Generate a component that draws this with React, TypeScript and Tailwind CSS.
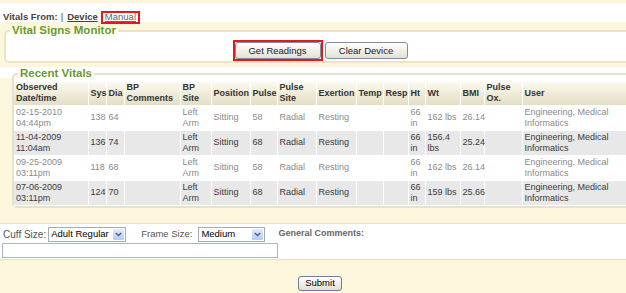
const cols = [
  'w-[74px]', 'w-[18px]', 'w-[18px]', 'w-[56px]', 'w-[31px]', 'w-[39px]', 'w-[27px]', 'w-[39px]',
  'w-[40px]', 'w-[27px]', 'w-[25px]', 'w-[17px]', 'w-[35px]', 'w-[24px]', 'w-[38px]', 'w-[110px]',
];

const headers = [
  'Observed Date/time', 'Sys', 'Dia', 'BP Comments', 'BP Site', 'Position', 'Pulse', 'Pulse Site',
  'Exertion', 'Temp', 'Resp', 'Ht', 'Wt', 'BMI', 'Pulse Ox.', 'User',
];

interface Vital {
  date: string;
  time: string;
  sys: string;
  dia: string;
  pulse: string;
  wt: string;
  bmi: string;
}

const vitals: Vital[] = [
  { date: '02-15-2010', time: '04:44pm', sys: '138', dia: '64', pulse: '58', wt: '162 lbs', bmi: '26.14' },
  { date: '11-04-2009', time: '11:04am', sys: '136', dia: '74', pulse: '68', wt: '156.4 lbs', bmi: '25.24' },
  { date: '09-25-2009', time: '03:11pm', sys: '118', dia: '68', pulse: '58', wt: '162 lbs', bmi: '26.14' },
  { date: '07-06-2009', time: '03:11pm', sys: '124', dia: '70', pulse: '68', wt: '159 lbs', bmi: '25.66' },
];

const Chevron = () => (
  <svg width="7" height="5" viewBox="0 0 7 5">
    <path d="M0.8 1 L3.5 3.6 L6.2 1" stroke="#4a5f8c" strokeWidth="1.4" fill="none" />
  </svg>
);

const FakeSelect = ({ value, width }: { value: string; width: string }) => (
  <div className={`${width} h-[15px] flex items-center border border-[#a5acb2] bg-white`}>
    <span className="pl-[2px] text-black leading-none whitespace-nowrap">{value}</span>
    <span className="ml-auto mr-[1px] w-[11px] h-[11px] flex items-center justify-center rounded-[1px] bg-linear-to-b from-[#e2eafd] to-[#b7c9f4]">
      <Chevron />
    </span>
  </div>
);

const Button = ({ label, width }: { label: string; width: string }) => (
  <button
    className={`${width} h-[17px] flex items-center justify-center border border-[#7d8ea2] rounded-[3px] bg-linear-to-b from-white to-[#e4e1d5] text-[#222] leading-none`}
  >
    {label}
  </button>
);

export default function App() {
  return (
    <div className="w-[626px] h-[293px] overflow-hidden bg-[#fcf6dc] font-['Liberation_Sans',Arial,sans-serif] text-[9.5px]">
      <div className="w-[640px]">
        {/* source switch */}
        <div className="pt-[3px]">
          <div className="h-[19px] bg-white flex items-baseline pt-[8px] pl-[3px] text-[#444] leading-[11px]">
            <span className="font-bold">Vitals From:</span>
            <span className="ml-[3px]">|</span>
            <span className="ml-[4px] font-bold underline">Device</span>
            <span className="ml-[3px] border-2 border-[#e21a1a] px-[2px] leading-[7px] pb-[2px] text-[#666] underline">
              Manual
            </span>
          </div>
        </div>

        {/* monitor */}
        <div className="pt-[2px] pl-[4px]">
          <fieldset className="w-[632px] border-2 border-[#ece4c2] rounded-[5px] bg-white px-[4px]">
            <legend className="px-[2px] text-[11.5px] leading-[13px] font-bold text-[#6b9a2a]">Vital Signs Monitor</legend>
            <div className="flex justify-center items-center gap-[2px] pt-[3px]">
              <div className="border-2 border-[#e21a1a]">
                <Button label="Get Readings" width="w-[86px]" />
              </div>
              <Button label="Clear Device" width="w-[83px]" />
            </div>
          </fieldset>
        </div>

        {/* recent vitals */}
        <div className="pl-[12px] pb-[15px] bg-[linear-gradient(to_bottom,#ffffff_11px,#fcf6dc_11px)]">
          <fieldset className="mt-[4px] w-[624px] border-2 border-[#e6e1cc] rounded-[5px] bg-white">
            <legend className="ml-[4px] px-[2px] text-[11.5px] leading-[13px] font-bold text-[#6b9a2a]">Recent Vitals</legend>
            <div className="pt-[2px]">
              <table className="table-fixed border-collapse w-[618px] text-[9px] leading-[11px]">
                <colgroup>
                  {cols.map((c, i) => (
                    <col key={i} className={c} />
                  ))}
                </colgroup>
                <thead>
                  <tr className="bg-linear-to-b from-[#fbf9ef] to-[#e4dec4]">
                    {headers.map((h) => (
                      <th key={h} className="h-[23px] pl-[2px] text-left align-middle font-bold text-[#333] border-r border-b border-white">
                        {h}
                      </th>
                    ))}
                  </tr>
                </thead>
                <tbody>
                  {vitals.map((v, i) => {
                    const even = i % 2 === 1;
                    const cells = [
                      <>
                        {v.date}
                        <br />
                        {v.time}
                      </>,
                      v.sys,
                      v.dia,
                      '',
                      'Left Arm',
                      'Sitting',
                      v.pulse,
                      'Radial',
                      'Resting',
                      '',
                      '',
                      '66 in',
                      v.wt,
                      v.bmi,
                      '',
                      'Engineering, Medical Informatics',
                    ];
                    return (
                      <tr key={v.date} className={even ? 'bg-[#e8e8e8] text-[#3a3a3a]' : 'bg-white text-[#8a8a8a]'}>
                        {cells.map((c, j) => (
                          <td key={j} className="py-[1px] pl-[2px] align-middle border-r border-b border-white">
                            {c}
                          </td>
                        ))}
                      </tr>
                    );
                  })}
                </tbody>
              </table>
            </div>
          </fieldset>
        </div>

        {/* measurements */}
        <div className="bg-white border-y border-[#e8e1c6] pt-[3px] pb-[1px] pl-[2px]">
          <div className="flex items-center text-[#555] pl-[1px]">
            <span className="text-[10px]">Cuff Size:</span>
            <div className="ml-[2px]">
              <FakeSelect value="Adult Regular" width="w-[78px]" />
            </div>
            <span className="ml-[15px]">Frame Size:</span>
            <div className="ml-[6px]">
              <FakeSelect value="Medium" width="w-[67px]" />
            </div>
            <span className="ml-[13px] font-bold text-[9px] text-[#666]">General Comments:</span>
          </div>
          <div className="mt-[1px] w-[276px] h-[15px] border border-[#a9b6c6] bg-white" />
        </div>

        <div className="flex justify-center pt-[16px]">
          <button className="w-[44px] h-[15px] flex items-center justify-center border border-[#6f7f93] rounded-[3px] bg-linear-to-b from-white to-[#e2dfd3] text-black leading-none">
            Submit
          </button>
        </div>
      </div>
    </div>
  );
}
